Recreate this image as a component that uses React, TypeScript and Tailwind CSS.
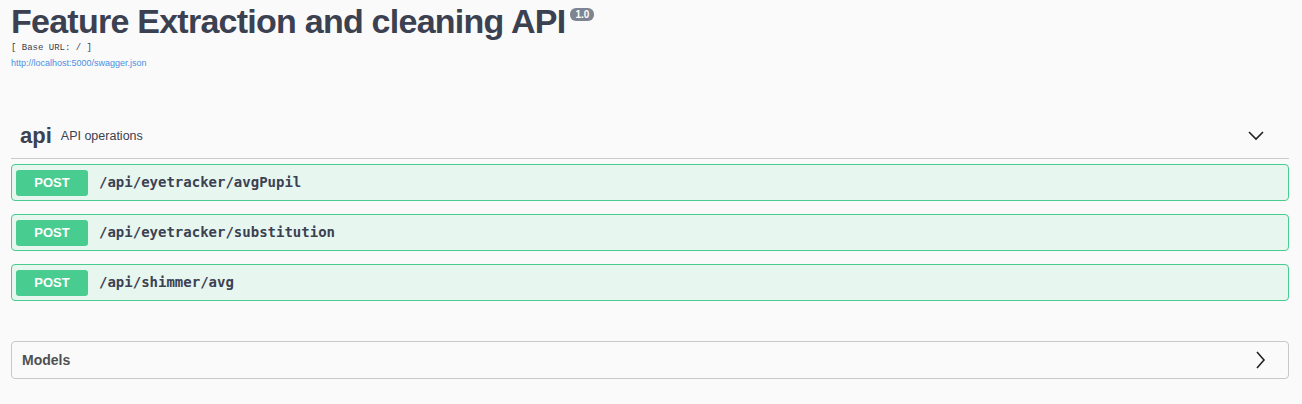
import React from "react";

const ops = [
  "/api/eyetracker/avgPupil",
  "/api/eyetracker/substitution",
  "/api/shimmer/avg",
];

const ChevronDown = () => (
  <svg width="18" height="12" viewBox="0 0 18 12" fill="none">
    <path d="M2 3l7 7 7-7" stroke="#222" strokeWidth="1.6" />
  </svg>
);

const ChevronRight = () => (
  <svg width="12" height="20" viewBox="0 0 12 20" fill="none">
    <path d="M3 2l7 8-7 8" stroke="#222" strokeWidth="1.6" />
  </svg>
);

const App = () => {
  return (
    <div
      className="w-[1302px] h-[404px] bg-[#fafafa] text-[#3b4151] overflow-hidden"
      style={{ fontFamily: '"Liberation Sans", Arial, sans-serif' }}
    >
      <div className="px-[11px] pr-[13px]">
        {/* info */}
        <div className="flex items-start">
          <h2 className="text-[34px] font-bold leading-[42px] tracking-[-0.75px]">
            Feature Extraction and cleaning API
          </h2>
          <span className="ml-[5px] mt-[8px] rounded-[6px] bg-[#7d8492] px-[5px] text-[10px] font-bold leading-[13px] text-white">
            1.0
          </span>
        </div>
        <div className="mt-[0px] font-['Liberation_Mono',monospace] text-[9px] leading-[12px] text-[#3b4151]">
          [ Base URL: / ]
        </div>
        <a className="mt-[3px] block text-[9px] leading-[12px] text-[#4990e2]">
          http://localhost:5000/swagger.json
        </a>

        {/* api tag */}
        <div className="mt-[45px] flex items-center border-b border-[#3b415140] pl-[9px] pr-[24px] h-[45px]">
          <span className="text-[22px] font-bold leading-none">api</span>
          <span className="ml-[9px] text-[12.5px]">API operations</span>
          <div className="ml-auto mb-[2px]">
            <ChevronDown />
          </div>
        </div>

        <div className="mt-[5px] flex flex-col gap-[13px]">
          {ops.map((p) => (
            <div
              key={p}
              className="flex h-[37px] items-center rounded-[4px] border border-[#49cc90] bg-[#e8f6f0] pl-[4px]"
            >
              <span className="flex h-[26px] w-[72px] items-center justify-center rounded-[3px] bg-[#49cc90] text-[13px] font-bold text-white">
                POST
              </span>
              <span className="ml-[11px] font-['DejaVu_Sans_Mono',monospace] text-[14px] font-bold text-[#3b4151]">
                {p}
              </span>
            </div>
          ))}
        </div>

        {/* models */}
        <div className="mt-[40px] flex h-[38px] items-center rounded-[4px] border border-[#c8c8cc] pl-[10px] pr-[22px]">
          <span className="text-[14px] font-bold text-[#505050]">Models</span>
          <div className="ml-auto">
            <ChevronRight />
          </div>
        </div>
      </div>
    </div>
  );
};

export default App;
